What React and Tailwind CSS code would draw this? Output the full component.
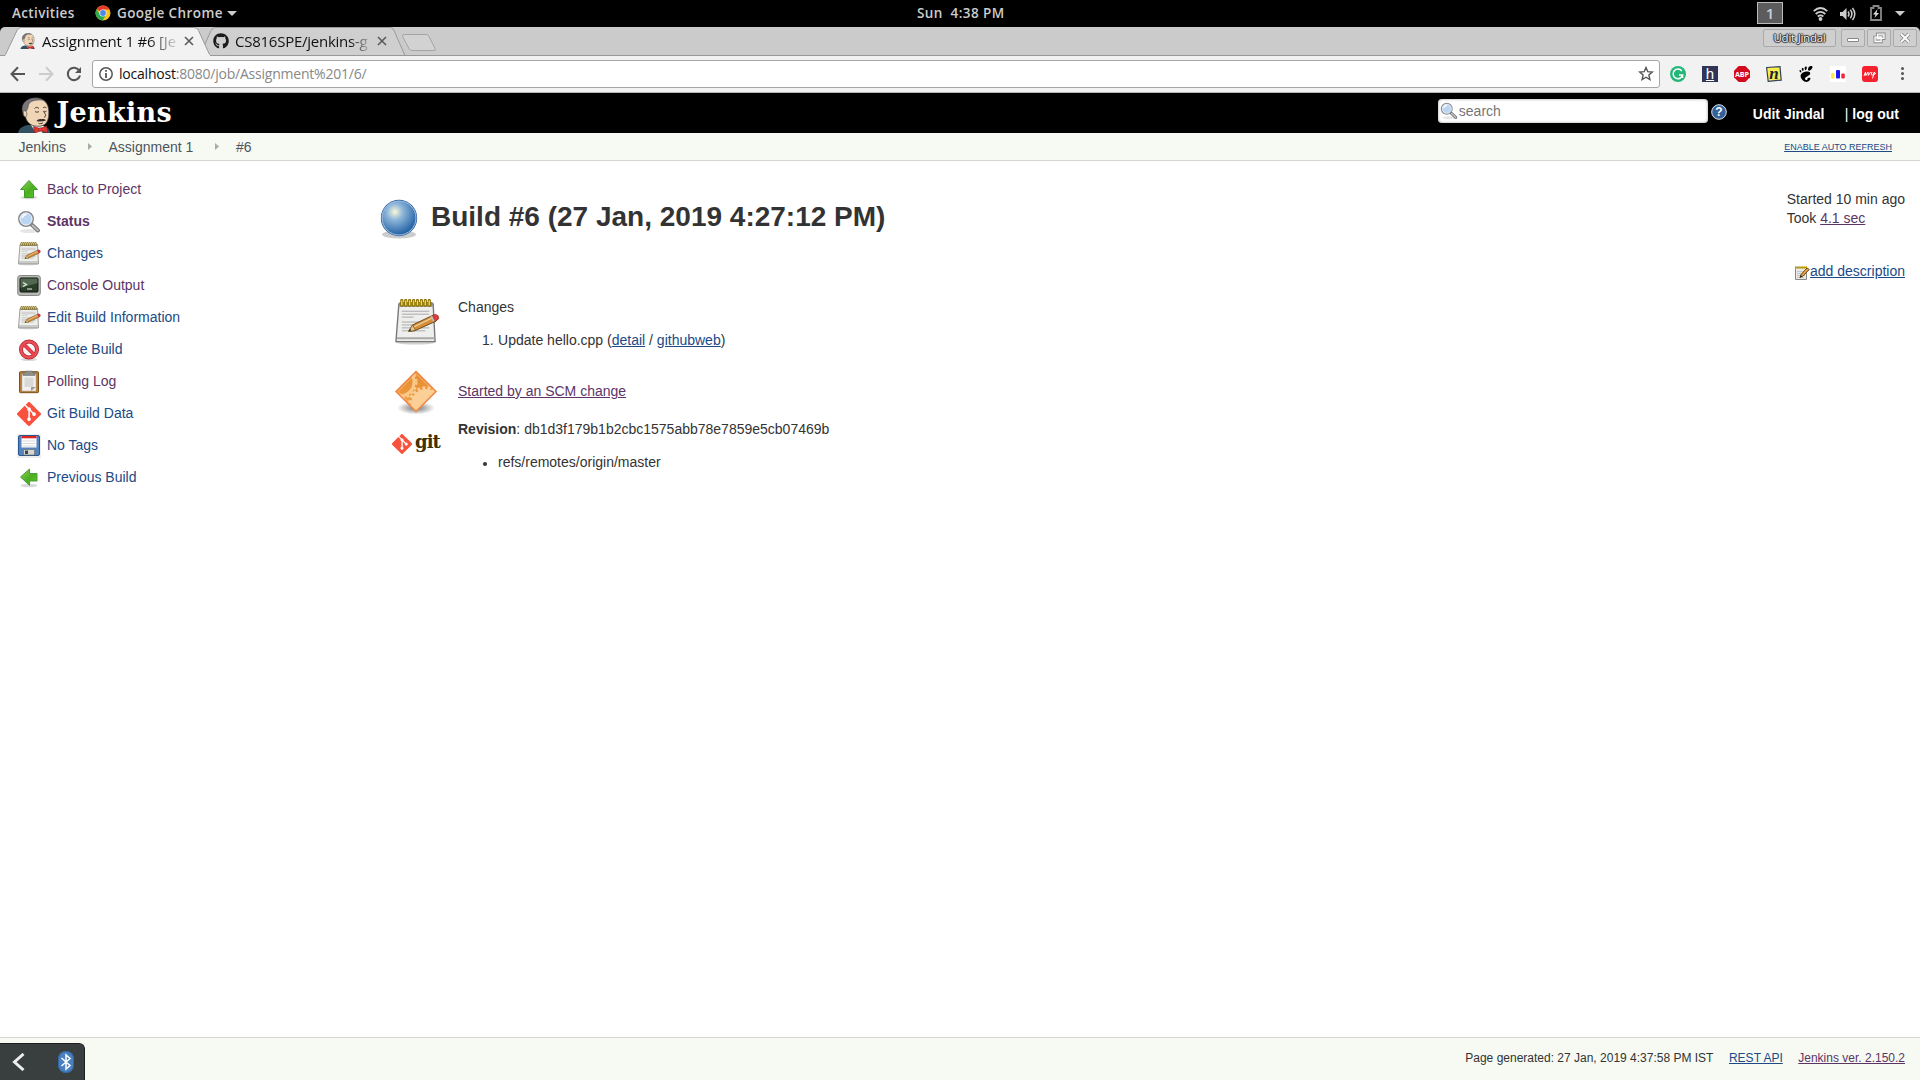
import React from "react";
import { FaGithub, FaGitAlt } from "react-icons/fa";
import { SiGnome } from "react-icons/si";

const UI = "font-['Open_Sans','Noto_Sans',sans-serif]";

function Chrome() {
  return (
    <svg className="w-4 h-4 shrink-0" viewBox="0 0 16 16">
      <circle cx="8" cy="8" r="7.5" fill="#fbc116" />
      <path d="M8 8 1.5 4.25A7.5 7.5 0 0 1 14.5 4.5H8z" fill="#e33b2e" />
      <path d="M1.5 4.25A7.5 7.5 0 0 0 7.6 15.5L11 9.8 5 9.8z" fill="#2da94f" />
      <circle cx="8" cy="8" r="3.6" fill="#f4f4f4" />
      <circle cx="8" cy="8" r="2.9" fill="#4a88ee" />
    </svg>
  );
}

function Butler({ className }) {
  return (
    <svg className={className} viewBox="0 0 34 36">
      <path d="M0 36C1 32 3 29.500 10 28l12 0c7 1 10 4 10 8z" fill="#335061" />
      <path d="M13 28l5 8h6l2-7z" fill="#f4f4f4" />
      <path d="M5 15C4 8 8 1.500 17 1.200c9-.4 13.500 5 13.800 13C31.200 22 29 28 23 29 14 30.500 9 26 7.500 20 5.500 19 4.500 17 5 15z" fill="#f0d6b7" stroke="#4a4543" strokeWidth=".8" />
      <path d="M4.500 14.500C3 9 6 3 14 1.300 20 0 24 2 25 3.200 19 2.500 14 3.500 11.500 6 10 8 10.500 10 9.500 12L8 14.500l-2.500 1z" fill="#77767a" stroke="#4a4543" strokeWidth=".5" />
      <path d="M5 14.500c2-2 4 0 3.800 3s-2 3-3 1z" fill="#f0d6b7" stroke="#4a4543" strokeWidth=".7" />
      <path d="M16.500 11.500c1.200-1.500 3-1.500 4.500 0M25 11c1-1.300 2.500-1 3.500 0M17 14.500c1 .9 3 .9 4 0M25 14c1 .9 2.500.9 3.500 0M26 15c2 3 2.500 4.500 0 5.200M20.500 26.300c1.500.8 3.500.3 4.500-.5" fill="none" stroke="#332e2c" strokeWidth=".9" />
      <path d="M18.500 24c1-1.500 3.500-2.500 5-1.700 1.700-.8 4-.2 4.500 1.200-3 .8-6.500 1.500-9.500.5z" fill="#332e2c" />
      <path d="M15.500 29.500 22 31.500l6.500-2.500 1 6.500-7-1.500-6 2z" fill="#e0352f" stroke="#81201c" strokeWidth=".6" />
      <circle cx="22.300" cy="32.500" r="1.700" fill="#ef3d3a" stroke="#81201c" strokeWidth=".5" />
    </svg>
  );
}

function TopBar() {
  return (
    <div className={`relative flex h-[27px] items-center bg-black text-[13.5px] font-semibold text-[#ccc] ${UI}`}>
      <span className="-mt-[2px] ml-3 w-[83px] whitespace-nowrap leading-[26px] tracking-[0.35px]">Activities</span>
      <span className="-mt-px flex"><Chrome /></span>
      <span className="-mt-[2px] ml-[6px] w-[106px] whitespace-nowrap leading-[26px] tracking-[0.4px]">Google Chrome</span>
      <i className="ml-1 h-0 w-0 border-x-[5px] border-t-[5px] border-x-transparent border-t-[#ccc]" />
      <span className="absolute left-[917px] top-0 whitespace-pre leading-[26px] tracking-[0.4px]">Sun&nbsp; 4:38 PM</span>
      <div className="ml-auto flex items-center">
        <span className="-mt-px mr-[30px] flex h-[22px] w-[26px] items-center justify-center border border-[#bbb] bg-[#5c5c5c] text-[15px] text-[#c5d2e4]">1</span>
        <svg className="mr-3 h-[15px] w-[15px]" viewBox="0 0 15 15" fill="none" stroke="#ccc" strokeWidth="1.800">
          <path d="M.7 5.200Q7.500-1.200 14.300 5.200" /><path d="M2.700 8Q7.500 3.800 12.300 8" /><path d="M4.700 10.500Q7.500 8.200 10.300 10.500" /><circle cx="7.500" cy="13" r="1" fill="#ccc" />
        </svg>
        <svg className="mr-[14px] h-[14px] w-[16px]" viewBox="0 0 16 14" fill="none" stroke="#ccc" strokeWidth="1.500">
          <path d="M0 5h2.500L6.500 1v12L2.500 9H0z" fill="#ccc" stroke="none" /><path d="M8 4.500q2 2.500 0 5M10.300 2.800q3.200 4.200 0 8.400M12.500 1q4.600 6 0 12" />
        </svg>
        <svg className="-mt-px mr-[13px] h-[16px] w-[12px]" viewBox="0 0 12 16">
          <path d="M1 3h2.500V1h5v2H11v12H1z" fill="none" stroke="#888" strokeWidth="1.800" /><path d="M7.500 4 3 9.500h2.500L4.500 13 9 8H6.500z" fill="#ddd" />
        </svg>
        <i className="mr-[15px] h-0 w-0 border-x-[5px] border-t-[5px] border-x-transparent border-t-[#ccc]" />
      </div>
    </div>
  );
}

function Close() {
  return (
    <svg className="h-[10px] w-[10px] shrink-0" viewBox="0 0 10 10"><path d="m1 1 8 8M9 1 1 9" stroke="#5a5a5a" strokeWidth="1.600" /></svg>
  );
}

function WindowButton({ children, className }) {
  return <div className={`flex h-[18px] items-center justify-center rounded-[2px] border border-[#aaa] bg-[#cfcfcf] ${className}`}>{children}</div>;
}

function TabStrip() {
  return (
    <div className="bg-black">
      <div className={`relative flex h-[29px] rounded-t-[5px] bg-[#cbcbcb] text-[15px] text-[#111] ${UI}`}>
        <svg className="absolute left-0 top-0 h-[29px] w-[1920px]" viewBox="0 0 1920 29" fill="none">
          <path d="M200 28.500 211 3.500Q212.500.5 215 .5H390Q393 .5 394 3.500L405 28.500z" fill="#cfcfcf" stroke="#999" />
          <path d="M0 28.500H5L17 3.500Q18.500.5 21 .5H194Q197 .5 198.500 3.500L210 28.500H1920" fill="#f2f2f2" stroke="#999" />
          <path d="M5.500 28.500H210" stroke="#f2f2f2" strokeWidth="1.500" />
          <path d="M404 7.500H426Q428 7.500 429 9.500L435 21.500Q436 23.500 434 23.500H412Q410 23.500 409 21.500L402.500 9.500Q402 7.500 404 7.500z" fill="#d2d2d2" stroke="#a5a5a5" />
        </svg>
        <div className="relative flex h-7 items-center pl-5">
          <Butler className="h-4 w-4" />
          <span className="ml-[6px] w-[134px] whitespace-nowrap bg-gradient-to-r from-[#111] from-80% to-[#11111122] bg-clip-text text-transparent tracking-[-0.2px]">Assignment 1 #6 [Je</span>
          <span className="ml-2 flex"><Close /></span>
        </div>
        <div className="relative ml-[19px] flex h-7 items-center">
          <FaGithub className="h-4 w-4 text-[#1b1b1b]" />
          <span className="ml-[6px] w-[135px] whitespace-nowrap bg-gradient-to-r from-[#111] from-85% to-[#11111122] bg-clip-text text-transparent tracking-[-0.25px]">CS816SPE/jenkins-g</span>
          <span className="ml-[7px] flex"><Close /></span>
        </div>
        <div className="relative ml-auto mr-[3px] flex items-start pt-[2px]">
          <WindowButton className="mr-[5px] w-[73px] text-[11.5px] leading-none text-[#f4f4f4] [text-shadow:1px_0_1px_#222,-1px_0_1px_#222,0_1px_1px_#222,0_-1px_1px_#222]"><span className="whitespace-nowrap leading-4 tracking-[-0.25px]">Udit Jindal</span></WindowButton>
          <WindowButton className="mr-[2px] w-6"><i className="mt-[4px] h-[4px] w-[12px] rounded-[1px] border border-[#888] bg-white" /></WindowButton>
          <WindowButton className="mr-[2px] w-6">
            <svg className="h-[12px] w-[13px]" viewBox="0 0 13 12"><path d="M4.500 2h6.500v4.500H4.500zM2 5.200h6.200v4.500H2z" fill="#ccc" stroke="#888" strokeWidth="3" /><path d="M4.500 2h6.500v4.500H4.500zM2 5.200h6.200v4.500H2z" fill="#bbb" stroke="#fff" strokeWidth="1.200" /></svg>
          </WindowButton>
          <WindowButton className="w-6">
            <svg className="h-[12px] w-[12px]" viewBox="0 0 12 12"><path d="m2 2 8 8M10 2l-8 8" stroke="#888" strokeWidth="3.600" /><path d="m2 2 8 8M10 2l-8 8" stroke="#fff" strokeWidth="1.800" /></svg>
          </WindowButton>
        </div>
      </div>
    </div>
  );
}

function Extensions() {
  return (
    <div className="flex h-4 items-center gap-4">
      <svg className="h-4 w-4" viewBox="0 0 16 16"><circle cx="8" cy="8" r="8" fill="#27b67a" /><path d="M11.800 5A4.800 4.800 0 1 0 12.600 9H9M12.500 9v3" fill="none" stroke="#fff" strokeWidth="1.500" /></svg>
      <span className="flex h-4 w-4 items-center justify-center bg-[#2f3556] font-['Liberation_Sans',sans-serif] text-[15px] leading-none text-white underline">h</span>
      <svg className="h-4 w-4" viewBox="0 0 16 16"><path d="M4.700 0h6.600L16 4.700v6.600L11.300 16H4.700L0 11.300V4.700z" fill="#d20a1e" /><text x="8" y="10.600" textAnchor="middle" fontSize="7.200" fontWeight="700" fill="#fff" fontFamily="Open Sans" textLength="14">ABP</text></svg>
      <svg className="h-4 w-4" viewBox="0 0 16 16"><path d="M.6 1.500 14 .6l1.200 13.500-13 1.300z" fill="#f5ee4d" stroke="#33415c" strokeWidth="1.200" /><text x="8" y="13" textAnchor="middle" fontSize="17" fontStyle="italic" fontWeight="700" fill="#1c2233" fontFamily="Liberation Serif">n</text></svg>
      <SiGnome className="h-4 w-4 text-black" />
      <svg className="h-4 w-4" viewBox="0 0 16 16"><path d="M0 0h16v16H0z" fill="#fff" /><rect x="1" y="7" width="3.500" height="5.500" rx="1" fill="#ffe93b" /><rect x="6" y="4" width="4" height="8.500" rx="1" fill="#1c16f2" /><rect x="11.300" y="7.500" width="3.500" height="5" rx="1" fill="#f3253d" /></svg>
      <svg className="h-4 w-4" viewBox="0 0 16 16"><rect width="16" height="16" rx="3" fill="#f5222d" /><path d="M2 10 3.500 6l.3 3.500L6 6l.3 3.500L8.600 6M10 6q-1.500 3.500 0 3.300T12.500 6L10.500 12.500M11 9.500 14 7" fill="none" stroke="#fff" strokeWidth="1" /></svg>
    </div>
  );
}

function AddressBar() {
  return (
    <div className="flex h-[37px] items-center border-b border-[#b5b5b5] bg-[#f2f2f2] pb-px pl-[10px] pr-4">
      <svg className="h-4 w-4" viewBox="0 0 16 16" fill="none" stroke="#555" strokeWidth="2"><path d="M15 8H2M8 1.300 1.500 8 8 14.700" /></svg>
      <svg className="ml-3 h-4 w-4" viewBox="0 0 16 16" fill="none" stroke="#ccc" strokeWidth="2"><path d="M1 8h13M8 1.300 14.500 8 8 14.700" /></svg>
      <svg className="ml-3 h-4 w-4" viewBox="0 0 16 16" fill="none" stroke="#555" strokeWidth="2"><path d="M13.200 4.500A6.200 6.200 0 1 0 14 9.500" /><path d="M15 1v6H9z" fill="#555" stroke="none" /></svg>
      <div className={`ml-[10px] flex h-7 w-[1568px] items-center rounded-[3px] border border-[#a6a6a6] bg-white pl-[6px] pr-[5px] text-[14px] text-[#888] ${UI}`}>
        <svg className="h-[14px] w-[14px]" viewBox="0 0 14 14"><circle cx="7" cy="7" r="6.200" fill="none" stroke="#555" strokeWidth="1.500" /><path d="M7 3v1.800M7 6v5" stroke="#555" strokeWidth="1.800" /></svg>
        <span className="ml-[6px] whitespace-nowrap tracking-[-0.22px]"><span className="text-[#111]">localhost</span>:8080/job/Assignment%201/6/</span>
        <svg className="ml-auto h-[15px] w-[16px]" viewBox="0 0 16 15"><path d="m8 1.500 1.800 4.200 4.500.4-3.400 3 1 4.400L8 11.200l-3.900 2.300 1-4.400-3.400-3 4.500-.4z" fill="none" stroke="#555" strokeWidth="1.400" /></svg>
      </div>
      <div className="ml-[10px]"><Extensions /></div>
      <div className="ml-auto flex flex-col gap-[2px]"><i className="h-[3px] w-[3px] rounded-full bg-[#555]" /><i className="h-[3px] w-[3px] rounded-full bg-[#555]" /><i className="h-[3px] w-[3px] rounded-full bg-[#555]" /></div>
    </div>
  );
}

function Magnifier({ className }) {
  return (
    <svg className={className} viewBox="0 0 24 24">
      <ellipse cx="12" cy="21" rx="9" ry="2" fill="#000" opacity=".1" />
      <path d="m14.500 14.500 6.500 6" stroke="#777" strokeWidth="4" strokeLinecap="round" /><path d="m15.500 15.500 5.300 4.800" stroke="#bbb" strokeWidth="2" strokeLinecap="round" />
      <circle cx="9" cy="9" r="7.200" fill="#b9d5f2" stroke="#8a8a8a" strokeWidth="1.600" /><circle cx="9" cy="9" r="6" fill="none" stroke="#eef4fb" strokeWidth="1" />
      <path d="M5 8q1-3.500 4.500-3.800" stroke="#fff" strokeWidth="2" fill="none" opacity=".8" />
    </svg>
  );
}

function JenkinsHeader() {
  return (
    <div className="flex h-10 bg-black font-['Liberation_Sans',sans-serif] text-white">
      <Butler className="ml-[18px] mt-1 h-9 w-[34px]" />
      <span className="ml-[4.5px] mt-[2px] font-['DejaVu_Serif',serif] text-[27px] font-bold leading-9 tracking-[0.3px]">Jenkins</span>
      <div className="ml-auto flex pr-[21px]">
        <div className="mt-[6px] flex h-6 w-[270px] items-center rounded-[4px] bg-white pl-[2px] shadow-[inset_0_0_3px_#999]">
          <Magnifier className="h-[18px] w-[18px]" />
          <span className="ml-[1px] text-[14px] leading-4 text-[#757575]">search</span>
        </div>
        <svg className="ml-[3px] mt-[11px] h-4 w-4" viewBox="0 0 16 16"><circle cx="8" cy="8" r="7.300" fill="#356098" stroke="#dbe5f0" strokeWidth="1" /><text x="8" y="12.300" textAnchor="middle" fontSize="12" fontWeight="700" fill="#fff" fontFamily="Liberation Sans">?</text></svg>
        <span className="ml-[26px] mt-[13px] w-[92px] whitespace-nowrap text-[14px] font-bold leading-4">Udit Jindal</span>
        <span className="mt-[13px] whitespace-nowrap text-[14px] leading-4">| <b>log out</b></span>
      </div>
    </div>
  );
}

function Breadcrumbs() {
  const arrow = <svg className="h-[7px] w-1" viewBox="0 0 4 7"><path d="M0 0 4 3.500 0 7z" fill="#aaa" /></svg>;
  return (
    <div className="flex h-7 items-center border-b border-[#d3d7cf] bg-[#f6faf2] pl-[18.5px] text-[14px] leading-4 text-[#4d545d]">
      <span className="w-[69.5px]">Jenkins</span>{arrow}
      <span className="ml-[16.5px] w-[106.5px]">Assignment 1</span>{arrow}
      <span className="ml-[17px]">#6</span>
      <a className="ml-auto mr-7 text-[9px] text-[#204a87] underline">ENABLE AUTO REFRESH</a>
    </div>
  );
}

function Notepad({ className }) {
  return (
    <svg className={className} viewBox="0 0 48 48">
      <ellipse cx="23" cy="44.500" rx="20" ry="2" fill="#000" opacity=".18" />
      <path d="M6 5h35l2 38.500H3z" fill="#eeeeec" stroke="#777" strokeWidth="1.400" />
      <path d="M4 40h38.500" stroke="#aaa" strokeWidth="2" />
      <path d="M6.500 3h34v5h-34z" fill="#8b8878" />
      <path d="M9 1.500v5M13 1.500v5M17 1.500v5M21 1.500v5M25 1.500v5M29 1.500v5M33 1.500v5M37 1.500v5" stroke="#8b7000" strokeWidth="3.200" strokeLinecap="round" />
      <path d="M9 2v4M13 2v4M17 2v4M21 2v4M25 2v4M29 2v4M33 2v4M37 2v4" stroke="#edd44a" strokeWidth="1.500" strokeLinecap="round" />
      <path d="M9 12.500h28M9 15.500h28M9 18.500h12M9 23.500h28M9 26.500h26M9 29.500h28M9 32.500h24" stroke="#aaa" strokeWidth="1" />
      <path d="m16 33 4-6.500L41 16.500l4 .5 1 3.500-3 2.500L22 32.500z" fill="#d38d3a" stroke="#6b4617" strokeWidth="1" />
      <path d="m21.500 28.500 18-9" stroke="#f3c98b" strokeWidth="1.500" />
      <path d="m16 33 4-6.500 3 5.600z" fill="#e9c68d" stroke="#5f430f" strokeWidth=".6" /><path d="m16 33 1.500-2.500 1 1.500z" fill="#222" />
      <path d="m40.500 16.600 3-.9 2.700 1.500.6 2.800-3.500 3z" fill="#e23c3c" stroke="#8c2b2b" strokeWidth=".6" /><path d="m39 17.500 2.500 5.200" stroke="#bbb" strokeWidth="1.700" />
    </svg>
  );
}

function NoteEdit() {
  return (
    <svg className="mt-[2px] h-4 w-4" viewBox="0 0 16 16">
      <path d="M1.500 2.500h11v12h-11z" fill="#e9e9e7" stroke="#888" />
      <path d="M3 6.500h8M3 8.500h8M3 10.500h8M3 12.500h7" stroke="#bbb" strokeWidth=".8" />
      <path d="M1 2.500h12" stroke="#c4a000" strokeWidth="2.600" strokeDasharray="1.500 .6" />
      <path d="m6 12.500 1-3L13 3l2.300 1.500L9 11z" fill="#e0a04c" stroke="#5a3c10" strokeWidth=".9" /><path d="m6 12.500.8-2.300 1.500 1.200z" fill="#222" />
    </svg>
  );
}

function GreenArrow({ left }) {
  return (
    <svg className="-mt-px h-6 w-6" viewBox="0 0 24 24">
      <defs><linearGradient id="green" x1="0" y1="0" x2="1" y2="1"><stop offset="0" stopColor="#8fd45f" /><stop offset=".55" stopColor="#4bae20" /><stop offset="1" stopColor="#55cf2c" /></linearGradient></defs>
      <ellipse cx="12" cy="20.500" rx="8.500" ry="1.800" fill="#000" opacity=".15" />
      {left
        ? <path d="M3.500 12 12.500 4v4.500h7.500v7.500h-7.500v4.300z" fill="url(#green)" stroke="#4c9a3a" />
        : <path d="M12 3.500 20.500 12.500h-4v8h-9v-8h-4z" fill="url(#green)" stroke="#3f9a28" />}
    </svg>
  );
}

function Terminal() {
  return (
    <svg className="h-6 w-6" viewBox="0 0 24 24">
      <rect x=".7" y="1.500" width="22.600" height="20" rx="2.500" fill="#b7b8b3" stroke="#888a85" />
      <rect x="3" y="4" width="18" height="14" rx="1" fill="#2a3f2a" stroke="#111" />
      <path d="M3.500 4.500h17v4.500L3.500 14z" fill="#7c9175" opacity=".5" />
      <path d="m6 8.500 3.500 2L6 12.500M10 15h5" fill="none" stroke="#e8f3df" strokeWidth="1.200" />
    </svg>
  );
}

function NoEntry() {
  return (
    <svg className="h-6 w-6" viewBox="0 0 24 24">
      <ellipse cx="12" cy="21.500" rx="8" ry="1.600" fill="#000" opacity=".15" />
      <circle cx="12" cy="11.500" r="8" fill="#f7f7f7" stroke="#b51f27" strokeWidth="4" /><path d="m6.500 6 11 11" stroke="#c8232b" strokeWidth="3.700" />
      <circle cx="12" cy="11.500" r="8" fill="none" stroke="#ea5058" strokeWidth="2.600" /><path d="m6.500 6 11 11" stroke="#ea4550" strokeWidth="2.300" />
    </svg>
  );
}

function Clipboard() {
  return (
    <svg className="h-6 w-6" viewBox="0 0 24 24">
      <rect x="2.500" y="1.700" width="19" height="21" rx="1" fill="#b97c35" stroke="#7d5018" />
      <path d="M5 4h14v17H5z" fill="#f1f1ef" stroke="#aaa" strokeWidth=".5" /><path d="M7.500 7.500h9V17h-9z" fill="#d9dad8" />
      <path d="M14 21v-4h5z" fill="#999c97" /><path d="M8.500 1h7v1.500H18V5.500H6V2.500h2.500z" fill="#8b8d86" stroke="#666" strokeWidth=".5" />
    </svg>
  );
}

function Floppy() {
  return (
    <svg className="h-6 w-6" viewBox="0 0 24 24">
      <path d="M0 0h24v24H0z" fill="#eee" /><rect x="1.500" y="1.500" width="21" height="20" rx="1.500" fill="#5583bd" stroke="#2d568d" />
      <path d="M4.500 2h15v11.500h-15z" fill="#fff" /><path d="M4.500 2h15v2.300h-15z" fill="#dd2727" /><path d="M5.500 7h13M5.500 9.500h13M5.500 12h13" stroke="#ccc" strokeWidth=".8" />
      <path d="M6.500 15.500h11V21h-11z" fill="#d3d7cf" stroke="#666" strokeWidth=".6" /><path d="M8 16.500h3V20H8z" fill="#444" />
    </svg>
  );
}

const GitMark = ({ className }) => <FaGitAlt className={className} color="#f8523e" viewBox="0 32 448 448" />;

const tasks = [
  ["Back to Project", <GreenArrow />, "text-[#5c3566]"],
  ["Status", <Magnifier className="h-6 w-6" />, "font-bold text-[#5c3566]"],
  ["Changes", <Notepad className="h-6 w-6" />, "text-[#204a87]"],
  ["Console Output", <Terminal />, "text-[#5c3566]"],
  ["Edit Build Information", <Notepad className="h-6 w-6" />, "text-[#204a87]"],
  ["Delete Build", <NoEntry />, "text-[#204a87]"],
  ["Polling Log", <Clipboard />, "text-[#5c3566]"],
  ["Git Build Data", <GitMark className="h-6 w-6" />, "text-[#204a87]"],
  ["No Tags", <Floppy />, "text-[#204a87]"],
  ["Previous Build", <GreenArrow left />, "text-[#204a87]"],
];

function BlueBall() {
  return (
    <svg className="-mt-px h-[42px] w-10" viewBox="0 0 40 42">
      <defs><radialGradient id="ball" cx=".38" cy=".32" r=".68"><stop offset="0" stopColor="#fbf8d8" /><stop offset=".35" stopColor="#8db6d9" /><stop offset="1" stopColor="#2463a5" /></radialGradient></defs>
      <ellipse cx="20" cy="36.500" rx="17" ry="4" fill="#000" opacity=".2" />
      <circle cx="20" cy="20" r="18.200" fill="#2c5c9c" /><circle cx="20" cy="20" r="17" fill="url(#ball)" stroke="#a6c5e4" strokeWidth="1" />
    </svg>
  );
}

function ScmIcon() {
  return (
    <svg className="h-12 w-12" viewBox="0 0 48 48">
      <defs>
        <radialGradient id="shade"><stop offset="0" stopColor="#000" stopOpacity=".55" /><stop offset="1" stopColor="#000" stopOpacity="0" /></radialGradient>
        <linearGradient id="orange" x1="0" y1="0" x2="0" y2="1"><stop offset="0" stopColor="#e58a2c" /><stop offset="1" stopColor="#f0a24c" /></linearGradient>
        <clipPath id="diamond"><path d="M24 4.500 43 23.500 24 42.500 5 23.500z" /></clipPath>
      </defs>
      <ellipse cx="24" cy="40" rx="19" ry="6.500" fill="url(#shade)" />
      <path d="M24 3.500 44 23.500 24 43.500 4 23.500z" fill="url(#orange)" stroke="#f08440" strokeWidth="1.500" />
      <g clipPath="url(#diamond)">
        <circle cx="34" cy="36" r="15" fill="#fccf96" /><circle cx="34" cy="36" r="16" fill="none" stroke="#fccf96" strokeWidth="3.500" strokeDasharray="2.800 2.300" />
        <circle cx="8" cy="14" r="14" fill="none" stroke="#fbc88c" strokeWidth="3" /><circle cx="8" cy="14" r="16" fill="none" stroke="#fbc88c" strokeWidth="3" strokeDasharray="2.800 2.300" />
        <path d="M24 5.500 42 23.500 24 41.500 6 23.500z" fill="none" stroke="#fdc58a" strokeWidth=".8" />
      </g>
    </svg>
  );
}

function BuildDetails() {
  return (
    <div className="mt-[58px] flex flex-col pl-[14px] leading-4">
      <div className="flex">
        <Notepad className="mt-px h-[47px] w-[47px]" />
        <div className="ml-[18px] mt-px">
          <p>Changes</p>
          <ol className="mt-[17px] flex pl-6"><li className="whitespace-nowrap">1. <span className="ml-[0.5px]">Update hello.cpp (<a className="text-[#204a87] underline">detail</a> / <a className="text-[#204a87] underline">githubweb</a>)</span></li></ol>
        </div>
      </div>
      <div className="mt-[18px] flex items-center">
        <div className="-ml-px mt-[2px]"><ScmIcon /></div>
        <a className="ml-[18px] text-[#5c3566] underline">Started by an SCM change</a>
      </div>
      <div className="mt-[5px] flex">
        <div className="-ml-px mt-[13px] flex h-5 w-[49px] items-center">
          <GitMark className="h-5 w-5 shrink-0" />
          <span className="ml-[3px] -mt-[4px] font-['DejaVu_Serif',serif] text-[18px] font-bold leading-5 tracking-[-0.9px] text-[#413000]">git</span>
        </div>
        <div className="ml-[17px]">
          <p className="whitespace-nowrap"><b>Revision</b>: db1d3f179b1b2cbc1575abb78e7859e5cb07469b</p>
          <p className="mt-[17px] flex items-center pl-[25px]"><i className="mr-[11px] mt-[3px] h-1 w-1 rounded-full bg-[#333]" />refs/remotes/origin/master</p>
        </div>
      </div>
    </div>
  );
}

export default function App() {
  return (
    <div className="flex h-[1080px] w-[1920px] flex-col overflow-hidden bg-white font-['Liberation_Sans',sans-serif] text-[14px] text-[#333]">
      <TopBar />
      <TabStrip />
      <AddressBar />
      <JenkinsHeader />
      <Breadcrumbs />
      <div className="flex flex-1">
        <nav className="w-[379px] pl-[17px] pt-3">
          {tasks.map(([label, icon, style]) => (
            <a key={label} className={`flex h-8 items-center gap-[6px] leading-4 ${style}`}><span className="mt-px h-6 w-6">{icon}</span><span>{label}</span></a>
          ))}
        </nav>
        <main className="flex-1 pr-[15px]">
          <div className="flex items-start justify-between">
            <div>
              <h1 className="mt-[38px] flex text-[28px] font-bold leading-8"><BlueBall /><span className="ml-3 mt-[2px] whitespace-nowrap">Build #6 (27 Jan, 2019 4:27:12 PM)</span></h1>
              <BuildDetails />
            </div>
            <div className="mt-[29px] flex flex-col items-end leading-[19px]">
              <p>Started 10 min ago<br />Took <a className="text-[#5c3566] underline">4.1 sec</a></p>
              <p className="mt-[34px] flex items-center text-[#204a87]"><NoteEdit /><a className="underline">add description</a></p>
            </div>
          </div>
        </main>
      </div>
      <footer className="flex h-[43px] items-end border-t border-[#d3d7cf] bg-[#f6faf2]">
        <div className="flex h-[37px] w-[85px] items-center rounded-tr-[6px] border-r border-t border-[#1b1f1f] bg-[#393f3f] pl-3">
          <svg className="h-[18px] w-[13px]" viewBox="0 0 13 18"><path d="M11.500 1 2.500 9l9 8" fill="none" stroke="#eee" strokeWidth="3" /></svg>
          <svg className="ml-[33px] h-[22px] w-4" viewBox="0 0 16 22"><rect width="16" height="22" rx="8" fill="#4a7fc0" /><rect x=".5" y=".5" width="15" height="21" rx="7.500" fill="none" stroke="#3465a4" /><path d="m3.500 7 8.500 7.500L8 18V4l4 3.500L3.500 15" fill="none" stroke="#fff" strokeWidth="1.500" /></svg>
        </div>
        <div className="ml-auto mr-[15px] flex self-start pt-[13px] text-[12px] leading-[14px]">
          <span>Page generated: 27 Jan, 2019 4:37:58 PM IST</span>
          <a className="ml-[15.5px] text-[#204a87] underline">REST API</a>
          <a className="ml-[15.5px] text-[#5c3566] underline">Jenkins ver. 2.150.2</a>
        </div>
      </footer>
    </div>
  );
}
